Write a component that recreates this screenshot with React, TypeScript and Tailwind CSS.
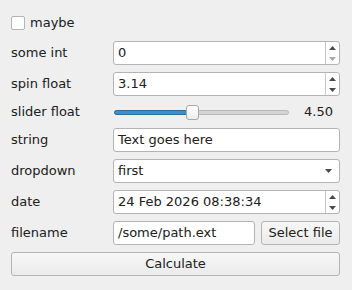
import React from "react";

const font = { fontFamily: '"DejaVu Sans", sans-serif' };

function Spin({ value, downDisabled }: { value: string; downDisabled?: boolean }) {
  return (
    <div className="flex h-[24px] flex-1 rounded-[3px] border border-[#b4b4b4] bg-white">
      <div className="flex flex-1 items-center pl-[4px] text-[13px] text-[#202020]">{value}</div>
      <div className="flex w-[14px] flex-col border-l border-[#c8c8c8]">
        <div className="flex flex-1 items-center justify-center">
          <svg width="7" height="4" viewBox="0 0 7 4">
            <polygon points="0,4 7,4 3.5,0" fill="#4a4a4a" />
          </svg>
        </div>
        <div className="flex flex-1 items-center justify-center">
          <svg width="7" height="4" viewBox="0 0 7 4">
            <polygon points="0,0 7,0 3.5,4" fill={downDisabled ? "#a8a8a8" : "#4a4a4a"} />
          </svg>
        </div>
      </div>
    </div>
  );
}

function Row({ label, children, h = "h-[24px]" }: { label: string; children: React.ReactNode; h?: string }) {
  return (
    <div className={`flex ${h} items-center`}>
      <div className="w-[102px] shrink-0 text-[13px] text-[#202020]">{label}</div>
      <div className="flex flex-1 items-center">{children}</div>
    </div>
  );
}

export default function App() {
  return (
    <div className="h-[290px] w-[352px] bg-[#efefef] pl-[11px] pr-[12px] pt-[11px]" style={font}>
      <div className="flex flex-col gap-[7px]">
        <div className="flex h-[23px] items-center gap-[5px]">
          <div className="h-[14px] w-[14px] rounded-[2px] border border-[#b4b4b4] bg-white" />
          <span className="text-[13px] text-[#202020]">maybe</span>
        </div>
        <Row label="some int">
          <Spin value="0" downDisabled />
        </Row>
        <Row label="spin float">
          <Spin value="3.14" />
        </Row>
        <Row label="slider float" h="h-[18px]">
          <div className="flex flex-1 items-center">
            <div className="relative ml-[1px] h-[18px] w-[175px]">
              <div className="absolute left-0 top-[7px] h-[5px] w-[175px] rounded-full border border-[#b8b8b8] bg-[#d4d4d4]" />
              <div className="absolute left-0 top-[7px] h-[5px] w-[76px] rounded-full border border-[#2b6f9e] bg-[#3a8fd0]" />
              <div className="absolute left-[72px] top-[2px] h-[15px] w-[13px] rounded-[3px] border border-[#a8a8a8] bg-gradient-to-b from-white to-[#ededed]" />
            </div>
            <div className="ml-[15px] text-[13px] text-[#202020]">4.50</div>
          </div>
        </Row>
        <Row label="string">
          <div className="flex h-[24px] flex-1 items-center rounded-[3px] border border-[#b4b4b4] bg-white pl-[4px] text-[13px] text-[#202020]">
            Text goes here
          </div>
        </Row>
        <Row label="dropdown">
          <div className="flex h-[24px] flex-1 items-center justify-between rounded-[3px] border border-[#b4b4b4] bg-white pl-[4px] pr-[7px] text-[13px] text-[#202020]">
            <span>first</span>
            <svg width="7" height="4" viewBox="0 0 7 4">
              <polygon points="0,0 7,0 3.5,4" fill="#4a4a4a" />
            </svg>
          </div>
        </Row>
        <Row label="date">
          <Spin value="24 Feb 2026 08:38:34" />
        </Row>
        <Row label="filename">
          <div className="flex flex-1 gap-[6px]">
            <div className="flex h-[24px] flex-1 items-center rounded-[3px] border border-[#b4b4b4] bg-white pl-[4px] text-[13px] text-[#202020]">
              /some/path.ext
            </div>
            <button className="h-[24px] w-[79px] rounded-[3px] border border-[#b4b4b4] bg-gradient-to-b from-[#f7f7f7] to-[#ebebeb] text-[13px] text-[#202020]">
              Select file
            </button>
          </div>
        </Row>
        <button className="h-[24px] w-full rounded-[3px] border border-[#b4b4b4] bg-gradient-to-b from-[#f7f7f7] to-[#ebebeb] text-[13px] text-[#202020]">
          Calculate
        </button>
      </div>
    </div>
  );
}
